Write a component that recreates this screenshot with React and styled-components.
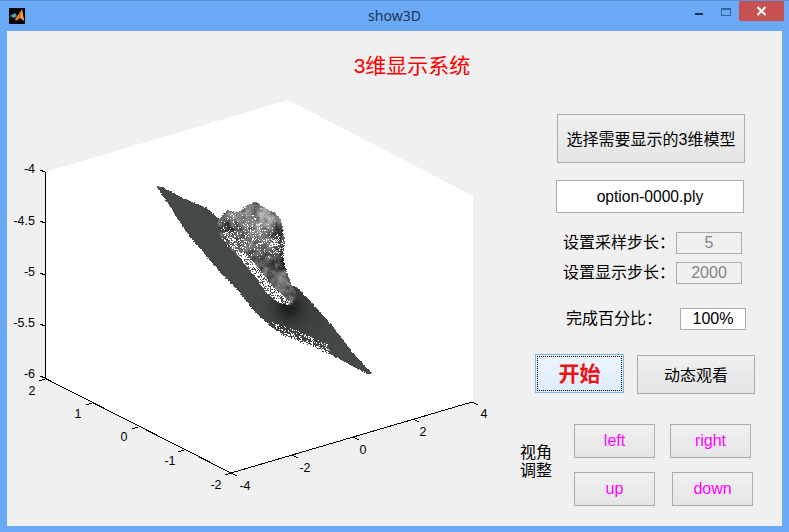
import React from "react"
import styled, { createGlobalStyle } from "styled-components"

const GlobalStyle = createGlobalStyle`
    html, body {
        margin: 0;
        padding: 0;
        background-color: #6aa9f5;
    }
    body {
        font-family: "Liberation Sans", "Noto Sans CJK SC", sans-serif;
        font-size: 16px;
        color: #000;
    }
`

// simple seeded random so the point cloud is the same on every load
const makeRandom = (seed) => () => {
    seed = (seed + 0x6d2b79f5) | 0
    let t = Math.imul(seed ^ (seed >>> 15), 1 | seed)
    t = (t + Math.imul(t ^ (t >>> 7), 61 | t)) ^ t
    return ((t ^ (t >>> 14)) >>> 0) / 4294967296
}

const inside = (poly, x, y) => {
    let hit = false
    for (let i = 0, j = poly.length - 1; i < poly.length; j = i++) {
        const [xi, yi] = poly[i]
        const [xj, yj] = poly[j]
        if (yi > y !== yj > y && x < ((xj - xi) * (y - yi)) / (yj - yi) + xi) hit = !hit
    }
    return hit
}

const gauss = (x, y, cx, cy, r) => Math.exp(-((x - cx) ** 2 + (y - cy) ** 2) / (2 * r * r))

const PLANE = [
    [156, 186], [163, 187], [183, 198], [207, 208], [220, 220], [240, 253], [273, 280], [297, 287],
    [320, 312], [333, 327], [353, 353], [372, 373], [368, 374], [347, 363], [327, 352], [307, 343],
    [283, 335], [267, 323], [253, 310], [240, 293], [220, 272], [207, 257], [187, 233], [170, 207],
]
const FRAYED = [[270, 321], [297, 330], [327, 343], [332, 357], [307, 346], [283, 337]]
// head outline and the bright strip under it, in crop coords (3x, from 210,195)
const HEAD = [
    [22, 75], [50, 45], [85, 50], [110, 30], [135, 18], [150, 30], [190, 50], [210, 70], [218, 100],
    [222, 140], [218, 175], [222, 210], [240, 260], [262, 300], [240, 330], [200, 320], [165, 290],
    [130, 240], [90, 190], [50, 150], [22, 110],
]
const STRIP = [
    [65, 155], [105, 172], [150, 225], [190, 275], [240, 320], [235, 330], [200, 320], [165, 290], [130, 240], [90, 190],
]

const buildCloud = () => {
    const random = makeRandom(42)
    const buckets = {}
    const put = (color, x, y) => {
        buckets[color] = (buckets[color] || "") + `M${x} ${y + 0.5}h1`
    }
    const grey = (v) => {
        const g = Math.max(24, Math.min(215, Math.round(v / 14) * 14))
        return `rgb(${g},${g},${g})`
    }

    // blotchy low frequency noise for the head surface
    const grid = Array.from({ length: 64 * 64 }, () => random())
    const noise = (x, y) => {
        const ix = Math.floor(x)
        const iy = Math.floor(y)
        const fx = x - ix
        const fy = y - iy
        const at = (a, b) => grid[(a & 63) + (b & 63) * 64]
        return (at(ix, iy) * (1 - fx) + at(ix + 1, iy) * fx) * (1 - fy)
            + (at(ix, iy + 1) * (1 - fx) + at(ix + 1, iy + 1) * fx) * fy
    }

    for (let y = 184; y < 377; y++) {
        for (let x = 154; x < 375; x++) {
            const frayed = inside(FRAYED, x, y)
            const jitter = frayed ? 3 : 1.2
            const jx = x + (random() - 0.5) * jitter
            const jy = y + (random() - 0.5) * jitter
            if (!inside(PLANE, jx, jy)) continue
            if (frayed && random() < 0.3) continue
            const shade = Math.round(68 - 36 * gauss(x, y, 288, 306, 10) - 8 * gauss(x, y, 300, 318, 22) + random() * 4)
            const base = Math.floor(shade / 4) * 4
            put(`rgb(${base},${base + 5},${base + 4})`, x, y)
        }
    }

    for (let y = 195; y < 312; y++) {
        for (let x = 210; x < 300; x++) {
            const zx = (x - 210) * 3
            const zy = (y - 195) * 3
            if (!inside(HEAD, zx + (random() - 0.5) * 5, zy + (random() - 0.5) * 5)) continue
            if (inside(STRIP, zx, zy)) {
                if (random() < 0.66) {
                    put("rgb(255,255,255)", x, y)
                } else {
                    put(grey(50 + random() * 70), x, y)
                }
                continue
            }
            const whiteChance = 0.8 * gauss(zx, zy, 196, 150, 16)
                + 0.5 * gauss(zx, zy, 58, 135, 20)
                + 0.32 * gauss(zx, zy, 130, 125, 32)
                + 0.2 * gauss(zx, zy, 65, 60, 14)
            if (random() < whiteChance * (noise(zx / 7, zy / 7) > 0.42 ? 1 : 0.3)) {
                put("rgb(255,255,255)", x, y)
                continue
            }
            const v = 92
                + 70 * gauss(zx, zy, 160, 62, 32)
                + 45 * gauss(zx, zy, 72, 62, 24)
                + 30 * gauss(zx, zy, 125, 125, 24)
                + 20 * gauss(zx, zy, 200, 275, 28)
                - 45 * gauss(zx, zy, 135, 45, 10)
                - 60 * gauss(zx, zy, 205, 112, 14)
                - 35 * gauss(zx, zy, 48, 95, 14)
                - 60 * gauss(zx, zy, 216, 195, 16)
                - 25 * gauss(zx, zy, 95, 110, 16)
                + (noise(zx / 11, zy / 11) - 0.5) * 80
                + (random() - 0.5) * 36
            put(grey(v), x, y)
        }
    }
    return Object.entries(buckets)
}

const CLOUD = buildCloud()

const Z_TICKS = [
    { y: 172, label: "-4", ly: 169 },
    { y: 223, label: "-4.5", ly: 221 },
    { y: 275, label: "-5", ly: 272 },
    { y: 326, label: "-5.5", ly: 323 },
    { y: 378, label: "-6", ly: 374 },
]
const Y_TICKS = [
    { x: 45, y: 379, label: "2", lx: 32, ly: 391 },
    { x: 92, y: 403, label: "1", lx: 78, ly: 414 },
    { x: 138, y: 427, label: "0", lx: 124, ly: 437 },
    { x: 184, y: 450, label: "-1", lx: 170, ly: 461 },
    { x: 231, y: 473, label: "-2", lx: 216, ly: 485 },
]
const X_TICKS = [
    { x: 231, y: 473, label: "-4", lx: 245, ly: 486 },
    { x: 292, y: 455, label: "-2", lx: 305, ly: 468 },
    { x: 353, y: 437, label: "0", lx: 363, ly: 450 },
    { x: 413, y: 419, label: "2", lx: 423, ly: 432 },
    { x: 472, y: 402, label: "4", lx: 484, ly: 414 },
]

const Plot = () => (
    <PlotSvg viewBox="7 95 510 400">
        <polygon points="45,172 288,100 473,196 473,402 231,473 45,378" fill="#fff" />
        {CLOUD.map(([color, d]) => (
            <path key={color} d={d} stroke={color} strokeWidth="1" fill="none" shapeRendering="crispEdges" />
        ))}
        <AxisLines>
            <polyline points="45.5,172 45.5,378.5 231,473 472,402" fill="none" />
            {Z_TICKS.map((t) => <line key={t.label} x1="40" y1={t.y - 2} x2="45" y2={t.y} />)}
            {Y_TICKS.map((t) => <line key={t.label} x1={t.x - 6} y1={t.y + 2} x2={t.x} y2={t.y} />)}
            {X_TICKS.map((t) => <line key={t.label} x1={t.x} y1={t.y} x2={t.x + 6} y2={t.y + 3} />)}
        </AxisLines>
        {Z_TICKS.map((t) => (
            <TickText key={t.label} x="35" y={t.ly} textAnchor="end" dominantBaseline="central">{t.label}</TickText>
        ))}
        {[...Y_TICKS, ...X_TICKS].map((t) => (
            <TickText key={`${t.label}-${t.lx}`} x={t.lx} y={t.ly} textAnchor="middle" dominantBaseline="central">{t.label}</TickText>
        ))}
    </PlotSvg>
)

const MatlabIcon = () => (
    <AppIcon viewBox="0 0 16 16">
        <rect width="16" height="16" fill="#05060a" />
        <polygon points="1,8 6,5 8,8 5,10" fill="#5f9ab0" />
        <polygon points="13,1 15,13 11,10 7,13 6,11 9,7" fill="#e8762a" />
        <polygon points="13,1 15,13 12,9" fill="#f8ab48" />
    </AppIcon>
)

const App = () => {
    return (
        <Window>
            <GlobalStyle />
            <TitleBar>
                <MatlabIcon />
                <WindowTitle>show3D</WindowTitle>
                <WindowButtons>
                    <MinimizeButton />
                    <MaximizeButton />
                    <CloseButton>
                        <svg width="11" height="10" viewBox="0 0 11 10">
                            <path d="M1.5 1 L9.5 9 M9.5 1 L1.5 9" stroke="#fff" strokeWidth="2" />
                        </svg>
                    </CloseButton>
                </WindowButtons>
            </TitleBar>
            <Client>
                <Heading>3维显示系统</Heading>
                <Body>
                    <Plot />
                    <Controls>
                        <ChooseButton>选择需要显示的3维模型</ChooseButton>
                        <FileField>option-0000.ply</FileField>
                        <SettingRow>
                            <SettingLabel>设置采样步长：</SettingLabel>
                            <DisabledField>5</DisabledField>
                        </SettingRow>
                        <SettingRow $second>
                            <SettingLabel>设置显示步长：</SettingLabel>
                            <DisabledField>2000</DisabledField>
                        </SettingRow>
                        <ProgressRow>
                            <SettingLabel>完成百分比：</SettingLabel>
                            <ProgressField>100%</ProgressField>
                        </ProgressRow>
                        <ActionRow>
                            <StartButton>开始</StartButton>
                            <WatchButton>动态观看</WatchButton>
                        </ActionRow>
                        <ViewRow>
                            <ViewLabel>视角<br />调整</ViewLabel>
                            <ViewButtons>
                                <ViewButtonRow $gap={15}>
                                    <ViewButton>left</ViewButton>
                                    <ViewButton>right</ViewButton>
                                </ViewButtonRow>
                                <ViewButtonRow $gap={17}>
                                    <ViewButton>up</ViewButton>
                                    <ViewButton>down</ViewButton>
                                </ViewButtonRow>
                            </ViewButtons>
                        </ViewRow>
                    </Controls>
                </Body>
            </Client>
        </Window>
    )
}

export default App

const Window = styled.div`
    width: 789px;
    height: 532px;
    overflow: hidden;
    display: flex;
    flex-direction: column;
    background-color: #6aa9f5;
    border-top: 1px solid #5c93d8;
    box-sizing: border-box;
`
const TitleBar = styled.div`
    height: 30px;
    flex-shrink: 0;
    display: flex;
    align-items: flex-start;
    position: relative;
    padding-left: 9px;
`
const AppIcon = styled.svg`
    width: 16px;
    height: 16px;
    margin-top: 7px;
`
const WindowTitle = styled.div`
    position: absolute;
    left: 0;
    right: 0;
    top: 5px;
    text-align: center;
    font-family: "Noto Sans", sans-serif;
    font-size: 14px;
    line-height: 20px;
    color: #1c3557;
`
const WindowButtons = styled.div`
    margin-left: auto;
    display: flex;
    align-items: flex-start;
    padding-right: 5px;
`
const MinimizeButton = styled.div`
    width: 8px;
    height: 2px;
    margin-top: 12px;
    background-color: #17335c;
`
const MaximizeButton = styled.div`
    width: 8px;
    height: 5px;
    margin: 7px 8px 0 18px;
    border: 1px solid #34659f;
    border-top-width: 2px;
`
const CloseButton = styled.div`
    width: 45px;
    height: 20px;
    display: flex;
    align-items: center;
    justify-content: center;
    background-color: #c75050;
`
const Client = styled.div`
    flex: 1;
    margin: 0 7px 6px 7px;
    background-color: #f0f0f0;
    display: flex;
    flex-direction: column;
`
const Heading = styled.div`
    margin-top: 22px;
    height: 42px;
    padding-left: 35px;
    text-align: center;
    font-size: 21px;
    line-height: 26px;
    color: #f00;
`
const Body = styled.div`
    display: flex;
    align-items: flex-start;
`
const PlotSvg = styled.svg`
    display: block;
    width: 510px;
    height: 400px;
    flex-shrink: 0;
`
const AxisLines = styled.g`
    stroke: #000;
    stroke-width: 1;
    shape-rendering: crispEdges;
`
const TickText = styled.text`
    font-family: "Liberation Sans", sans-serif;
    font-size: 12.5px;
    fill: #000;
`
const Controls = styled.div`
    width: 265px;
    padding-top: 19px;
    display: flex;
    flex-direction: column;
`
const PushButton = styled.button`
    box-sizing: border-box;
    margin: 0;
    padding: 0;
    border: 1px solid #acacac;
    background: linear-gradient(#f0f0f0, #e5e5e5);
    font-family: "Liberation Sans", "Noto Sans CJK SC", sans-serif;
    font-size: 16px;
    color: #000;
`
const ChooseButton = styled(PushButton)`
    width: 188px;
    height: 49px;
    margin-left: 40px;
    padding-bottom: 2px;
`
const TextBox = styled.div`
    box-sizing: border-box;
    display: flex;
    align-items: center;
    justify-content: center;
    background-color: #fff;
    border: 1px solid #acacac;
    font-size: 16px;
`
const FileField = styled(TextBox)`
    width: 188px;
    height: 33px;
    margin: 17px 0 0 39px;
    font-size: 15.6px;
`
const SettingRow = styled.div`
    display: flex;
    align-items: center;
    height: 22px;
    padding-left: 46px;
    margin-top: ${(p) => (p.$second ? "8px" : "19px")};
`
const SettingLabel = styled.div`
    width: 113px;
    flex-shrink: 0;
    white-space: nowrap;
    font-size: 16px;
    line-height: 20px;
`
const DisabledField = styled(TextBox)`
    width: 66px;
    height: 22px;
    background-color: #f0f0f0;
    color: #848484;
`
const ProgressRow = styled(SettingRow)`
    margin-top: 24px;
    padding-left: 49px;
`
const ProgressField = styled(TextBox)`
    width: 66px;
    height: 22px;
    margin-left: 1px;
`
const ActionRow = styled.div`
    display: flex;
    align-items: flex-start;
    gap: 13px;
    margin-top: 24px;
    padding-left: 18px;
`
const StartButton = styled(PushButton)`
    width: 89px;
    height: 39px;
    padding-bottom: 4px;
    border-color: #7eb4ea;
    background: linear-gradient(#ecf5fd, #dcecfc);
    outline: 1px dotted #000;
    outline-offset: -3px;
    font-size: 21px;
    font-weight: 700;
    color: #ee1111;
`
const WatchButton = styled(PushButton)`
    width: 118px;
    height: 39px;
    margin-top: 1px;
    padding-bottom: 2px;
`
const ViewRow = styled.div`
    display: flex;
    align-items: flex-start;
    margin-top: 30px;
    padding-left: 3px;
`
const ViewLabel = styled.div`
    width: 54px;
    flex-shrink: 0;
    font-size: 16px;
    line-height: 18px;
    margin-top: 20px;
`
const ViewButtons = styled.div`
    display: flex;
    flex-direction: column;
    gap: 14px;
`
const ViewButtonRow = styled.div`
    display: flex;
    gap: ${(p) => p.$gap}px;
`
const ViewButton = styled(PushButton)`
    width: 81px;
    height: 34px;
    color: #f0f;
`
